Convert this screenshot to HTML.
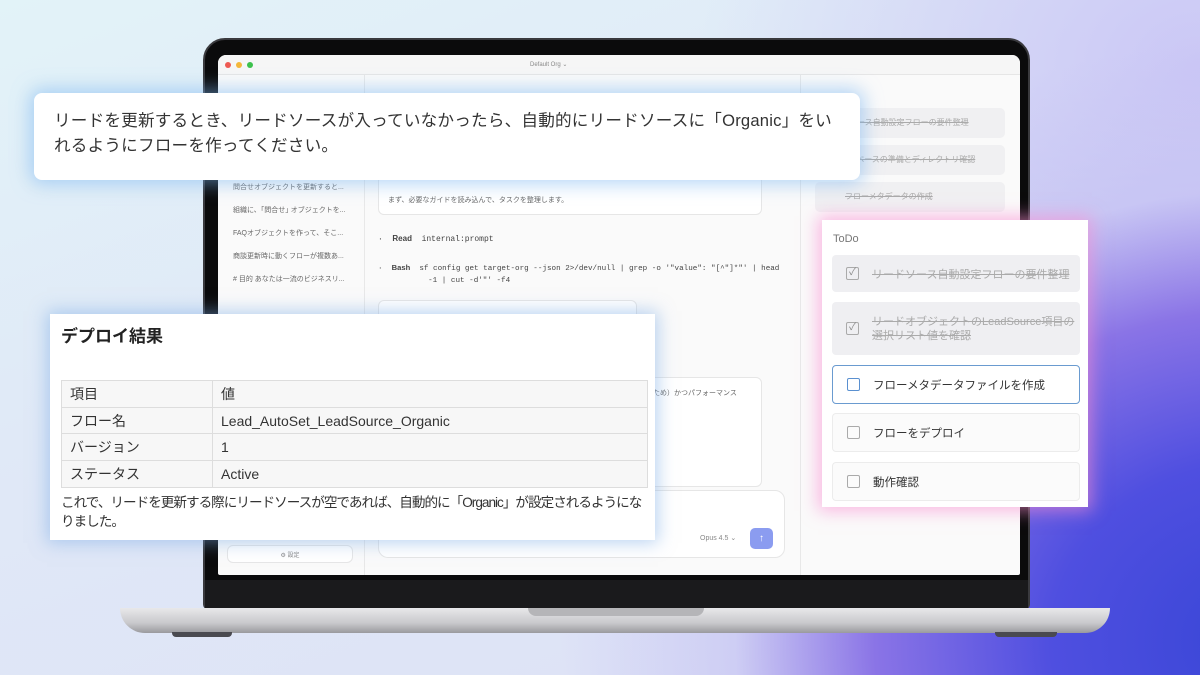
<!DOCTYPE html>
<html><head><meta charset="utf-8"><style>
*{margin:0;padding:0;box-sizing:border-box}
body{width:1200px;height:675px;overflow:hidden;position:relative;font-family:"Liberation Sans","Noto Sans CJK JP",sans-serif;
background:radial-gradient(ellipse 700px 600px at 105% 95%,#3846d6 0%,#4f4fe0 30%,#8a74e6 55%,rgba(190,185,242,.5) 75%,rgba(220,225,246,0) 100%),radial-gradient(ellipse 500px 400px at 100% 10%,rgba(200,195,245,.9),rgba(210,210,245,0)),linear-gradient(160deg,#e2f3f8 0%,#e0e9f7 40%,#dde0f6 100%);}
.abs{position:absolute}
.bezel{left:203px;top:38px;width:827px;height:572px;background:#0b0b0c;border-radius:22px 22px 6px 6px;border:2px solid #3a3a3e}
.screen{left:218px;top:55px;width:802px;height:520px;background:#fafafa;border-radius:8px 8px 2px 2px;overflow:hidden}
.chin{left:205px;top:580px;width:823px;height:28px;background:#1a1a1c}
.base{left:120px;top:608px;width:990px;height:25px;background:linear-gradient(#e8e8ea,#c9c9cc 60%,#9a9a9e);border-radius:0 0 26px 26px}
.notch{left:528px;top:608px;width:176px;height:8px;background:#b5b5b8;border-radius:0 0 8px 8px}
.foot{top:632px;height:5px;background:#4a4a50;border-radius:0 0 4px 4px}
.t{font-size:7px;color:#666;position:absolute;white-space:nowrap}
.card{position:absolute;background:#fff;border:1px solid #e6e6e6;border-radius:6px}
.mono{font-family:"Liberation Mono","Noto Sans CJK JP",monospace;font-size:8px;color:#444;white-space:nowrap}
.ri{position:absolute;left:815px;width:190px;height:30px;background:#f0f0f2;border-radius:5px;font-size:8px;color:#aaa;text-decoration:line-through;padding:9px 10px}
.todo{position:absolute;left:832px;width:248px;border-radius:4px;font-size:11.5px;color:#333;padding-left:40px;display:flex;align-items:center;white-space:nowrap}
.cb{position:absolute;left:14px;width:13px;height:13px;border:1.3px solid #aaa;border-radius:2px;top:50%;margin-top:-6.5px;font-size:10px;line-height:10px;text-align:center;color:#888;text-decoration:none}
.done{background:#efeff2;color:#aaa;text-decoration:line-through}
table{border-collapse:collapse;position:absolute;left:61px;top:380px;width:587px;font-size:14px;color:#333}
td{border:1px solid #ddd;background:#f7f7f7;height:26.7px;padding:0 8px}
</style></head><body>
<div class="abs bezel"></div>
<div class="abs chin"></div>
<div class="abs base"></div>
<div class="abs notch"></div>
<div class="abs foot" style="left:172px;width:60px"></div>
<div class="abs foot" style="left:995px;width:62px"></div>
<div class="abs screen">
 <div class="abs" style="left:0;top:0;width:802px;height:20px;background:#f6f6f6;border-bottom:1px solid #e6e6e6"></div>
 <div class="abs" style="left:7px;top:7px;width:6px;height:6px;border-radius:50%;background:#ee5a52"></div>
 <div class="abs" style="left:18px;top:7px;width:6px;height:6px;border-radius:50%;background:#f4b73a"></div>
 <div class="abs" style="left:29px;top:7px;width:6px;height:6px;border-radius:50%;background:#3dc14c"></div>
 <div class="t" style="left:312px;top:6px;font-size:6px;color:#888">Default Org ⌄</div>
 <div class="abs" style="left:146px;top:20px;width:1px;height:500px;background:#e8e8e8"></div>
 <div class="abs" style="left:582px;top:20px;width:1px;height:500px;background:#e8e8e8"></div>
 <div class="t" style="left:15px;top:127px">問合せオブジェクトを更新すると...</div>
 <div class="t" style="left:15px;top:150px">組織に、｢問合せ｣ オブジェクトを...</div>
 <div class="t" style="left:15px;top:173px">FAQオブジェクトを作って、そこ...</div>
 <div class="t" style="left:15px;top:196px">商談更新時に動くフローが複数あ...</div>
 <div class="t" style="left:15px;top:219px"># 目的 あなたは一流のビジネスリ...</div>
 <div class="card" style="left:9px;top:490px;width:126px;height:18px;font-size:6px;color:#888;text-align:center;padding-top:4px">⚙ 設定</div>
 <div class="card" style="left:160px;top:120px;width:384px;height:40px"></div>
 <div class="t" style="left:170px;top:140px">まず、必要なガイドを読み込んで、タスクを整理します。</div>
 <div class="abs mono" style="left:160px;top:179px">·&nbsp; <b style="font-family:Liberation Sans">Read</b>&nbsp; internal:prompt</div>
 <div class="abs mono" style="left:160px;top:207px;line-height:12px;font-size:7.6px">·&nbsp; <b style="font-family:Liberation Sans">Bash</b>&nbsp; sf config get target-org --json 2>/dev/null | grep -o '"value": "[^"]*"' | head<br>&nbsp;&nbsp;&nbsp;&nbsp;&nbsp;&nbsp;&nbsp;&nbsp;&nbsp;&nbsp; -1 | cut -d'"' -f4</div>
 <div class="card" style="left:160px;top:245px;width:259px;height:30px"></div>
 <div class="card" style="left:160px;top:322px;width:384px;height:110px"></div>
 <div class="t" style="left:435px;top:333px">ため）かつパフォーマンス</div>
 <div class="card" style="left:160px;top:435px;width:407px;height:68px;border-radius:10px"></div>
 <div class="t" style="left:482px;top:479px;color:#888">Opus 4.5 ⌄</div>
 <div class="abs" style="left:532px;top:473px;width:23px;height:21px;background:#8b9cf0;border-radius:5px;color:#fff;font-size:10px;text-align:center;line-height:21px">↑</div>
</div>
<div class="ri" style="top:108px">リードソース自動設定フローの要件整理</div>
<div class="ri" style="top:145px">タスクスペースの準備とディレクトリ確認</div>
<div class="ri" style="top:182px;padding-left:30px">フローメタデータの作成</div>

<div class="abs" style="left:34px;top:93px;width:826px;height:87px;background:#fff;border-radius:8px;box-shadow:0 0 18px 4px rgba(120,180,240,.55);font-size:16.6px;color:#333;line-height:25px;padding:15px 20px 0 20px;white-space:nowrap;letter-spacing:.2px">リードを更新するとき、リードソースが入っていなかったら、自動的にリードソースに「Organic」をい<br>れるようにフローを作ってください。</div>

<div class="abs" style="left:50px;top:314px;width:605px;height:226px;background:#fff;box-shadow:0 0 16px 3px rgba(120,170,230,.5)"></div>
<div class="abs" style="left:61px;top:322px;font-size:17px;font-weight:bold;color:#222">デプロイ結果</div>
<table>
<tr><td style="width:151px">項目</td><td>値</td></tr>
<tr><td>フロー名</td><td>Lead_AutoSet_LeadSource_Organic</td></tr>
<tr><td>バージョン</td><td>1</td></tr>
<tr><td>ステータス</td><td>Active</td></tr>
</table>
<div class="abs" style="left:61px;top:493px;font-size:13.6px;color:#333;line-height:19px;white-space:nowrap;letter-spacing:-1px">これで、リードを更新する際にリードソースが空であれば、自動的に「Organic」が設定されるようにな<br>りました。</div>

<div class="abs" style="left:822px;top:220px;width:266px;height:287px;background:#fff;box-shadow:0 0 16px 4px rgba(250,140,210,.6)"></div>
<div class="abs" style="left:833px;top:233px;font-size:11px;color:#777">ToDo</div>
<div class="todo done" style="top:255px;height:37px;font-size:11px"><span class="cb">✓</span>リードソース自動設定フローの要件整理</div>
<div class="todo done" style="top:302px;height:53px;line-height:14px;font-size:11px"><span class="cb">✓</span>リードオブジェクトのLeadSource項目の<br>選択リスト値を確認</div>
<div class="todo" style="top:365px;height:39px;border:1.5px solid #6a9bd0;background:#fff"><span class="cb" style="border-color:#5a90d0"></span>フローメタデータファイルを作成</div>
<div class="todo" style="top:413px;height:39px;border:1px solid #ececec;background:#fbfbfb"><span class="cb"></span>フローをデプロイ</div>
<div class="todo" style="top:462px;height:39px;border:1px solid #ececec;background:#fbfbfb"><span class="cb"></span>動作確認</div>
</body></html>
